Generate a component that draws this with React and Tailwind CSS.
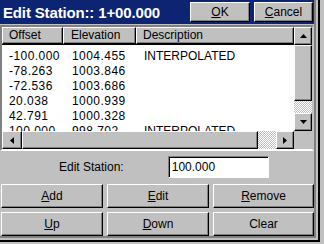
import React from "react";

const raised =
  "bg-[#c0c0c0] border border-t-white border-l-white border-b-black border-r-black shadow-[inset_-1px_-1px_0_#808080]";
const dither =
  "bg-[image:repeating-conic-gradient(#ffffff_0%_25%,#c0c0c0_0%_50%)] bg-[length:2px_2px]";

function Arrow({ dir }) {
  const pts = {
    up: "3.5,0 7,4 0,4",
    down: "0,0 7,0 3.5,4",
    left: "4,0 4,7 0,3.5",
    right: "0,0 4,3.5 0,7",
  }[dir];
  const vertical = dir === "up" || dir === "down";
  return (
    <svg width={vertical ? 7 : 4} height={vertical ? 4 : 7} viewBox={vertical ? "0 0 7 4" : "0 0 4 7"}>
      <polygon points={pts} fill="#000" />
    </svg>
  );
}

function Btn({ children, className = "" }) {
  return (
    <div className={`${raised} flex items-center justify-center text-[12px] text-black ${className}`}>
      {children}
    </div>
  );
}

const rows = [
  ["-100.000", "1004.455", "INTERPOLATED"],
  ["-78.263", "1003.846", ""],
  ["-72.536", "1003.686", ""],
  ["20.038", "1000.939", ""],
  ["42.791", "1000.328", ""],
  ["100.000", "998.702", "INTERPOLATED"],
];

export default function App() {
  return (
    <div className="w-[324px] h-[244px] bg-[#c0c0c0] overflow-hidden font-['Liberation_Sans',Arial,sans-serif] text-black">
      {/* window frame */}
      <div className="w-[320px] h-[242px] border-r-2 border-b-2 border-black">
        <div className="h-full border-r-2 border-b-2 border-[#c0c0c0]">
          <div className="h-full border-r-2 border-b-2 border-[#808080] flex flex-col">
            {/* title bar */}
            <div className="h-[24px] bg-[#0c2472] flex items-center pr-[1px]">
              <span className="flex-1 pl-[3px] text-white font-bold text-[15px] tracking-[-0.15px] leading-none">
                Edit Station:: 1+00.000
              </span>
              <Btn className="w-[60px] h-[20px]">
                <span><u>O</u>K</span>
              </Btn>
              <Btn className="w-[59px] h-[20px] ml-[4px]">
                <span><u>C</u>ancel</span>
              </Btn>
            </div>

            {/* list box */}
            <div className="mt-[1px] h-[126px] border-2 border-t-[#808080] border-l-[#808080] border-b-white border-r-[#c0c0c0] shadow-[inset_1px_1px_0_#000] flex">
              <div className="w-[292px] flex flex-col">
                <div className="h-[17px] flex text-[12px]">
                  <div className={`${raised} w-[61px] pl-[6px] leading-[14px]`}>Offset</div>
                  <div className={`${raised} w-[73px] pl-[7px] leading-[14px]`}>Elevation</div>
                  <div className={`${raised} flex-1 pl-[6px] leading-[14px]`}>Description</div>
                </div>
                <div className="flex-1 bg-white overflow-hidden pt-[4px] border-t border-black text-[12px]">
                  {rows.map((r, i) => (
                    <div key={i} className="h-[15px] flex leading-[15px]">
                      <span className="w-[70px] pl-[7px] tracking-[0.45px]">{r[0]}</span>
                      <span className="w-[72px] tracking-[0.45px]">{r[1]}</span>
                      <span>{r[2]}</span>
                    </div>
                  ))}
                </div>
                {/* horizontal scrollbar */}
                <div className="h-[18px] flex">
                  <Btn className="w-[20px] h-full"><Arrow dir="left" /></Btn>
                  <div className={`${raised} w-[236px] h-full`} />
                  <div className={`${dither} w-[18px] h-full`} />
                  <Btn className="w-[18px] h-full"><Arrow dir="right" /></Btn>
                </div>
              </div>
              {/* vertical scrollbar */}
              <div className="w-[18px] flex flex-col">
                <Btn className="h-[18px]"><Arrow dir="up" /></Btn>
                <div className={`${raised} h-[56px]`} />
                <div className={`${dither} h-[12px]`} />
                <Btn className="h-[18px]"><Arrow dir="down" /></Btn>
                <div className="flex-1 bg-[#c0c0c0]" />
              </div>
            </div>

            {/* edit station */}
            <div className="mt-[5px] h-[22px] flex items-center text-[12px]">
              <span className="pl-[59px]">Edit Station:</span>
              <div className="ml-[44px] w-[101px] h-[22px] bg-white border border-t-[#808080] border-l-[#808080] border-b-white border-r-white shadow-[inset_1px_1px_0_#000] pl-[3px] leading-[20px]">
                100.000
              </div>
            </div>

            {/* buttons */}
            <div className="mt-[6px] pl-[1px] grid grid-cols-[102px_102px_101px] gap-x-[4px] gap-y-[4px]">
              <Btn className="h-[24px]"><span><u>A</u>dd</span></Btn>
              <Btn className="h-[24px]"><span><u>E</u>dit</span></Btn>
              <Btn className="h-[24px]"><span><u>R</u>emove</span></Btn>
              <Btn className="h-[24px]"><span><u>U</u>p</span></Btn>
              <Btn className="h-[24px]"><span><u>D</u>own</span></Btn>
              <Btn className="h-[24px]"><span>Clear</span></Btn>
            </div>
          </div>
        </div>
      </div>
    </div>
  );
}
